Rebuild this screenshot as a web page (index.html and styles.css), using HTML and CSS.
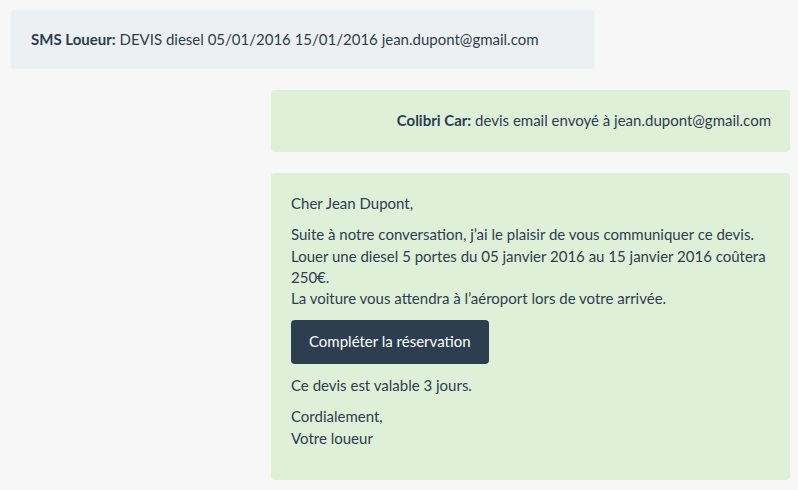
FILE: index.html
```html
<!DOCTYPE html>
<html lang="fr">
<head>
<meta charset="utf-8">
<link rel="stylesheet" href="styles.css">
</head>
<body>
<div class="chat">
  <div class="msg msg-in">
    <strong>SMS Loueur:</strong> DEVIS diesel 05/01/2016 15/01/2016 jean.dupont@gmail.com
  </div>
  <div class="msg msg-out align-right">
    <strong>Colibri Car:</strong> devis email envoyé à jean.dupont@gmail.com
  </div>
  <div class="msg msg-out email">
    <p>Cher Jean Dupont,</p>
    <p>Suite à notre conversation, j’ai le plaisir de vous communiquer ce devis.<br>
    Louer une diesel 5 portes du 05 janvier 2016 au 15 janvier 2016 coûtera 250€.<br>
    La voiture vous attendra à l’aéroport lors de votre arrivée.</p>
    <p class="action"><a class="btn" href="#">Compléter la réservation</a></p>
    <p>Ce devis est valable 3 jours.</p>
    <p>Cordialement,<br>Votre loueur</p>
  </div>
</div>
</body>
</html>
```

FILE: styles.css
```css
html, body {
  margin: 0;
  padding: 0;
  background: #f7f7f7;
}
body {
  font-family: Lato, "Open Sans", sans-serif;
  font-size: 15px;
  line-height: 21.4px;
  color: #2c3e50;
}
.chat {
  display: flex;
  flex-direction: column;
  gap: 21px;
  padding: 10px 8px 10px 11px;
}
.msg {
  border-radius: 4px;
  padding: 19px 20px;
  box-sizing: border-box;
}
.msg-in {
  background: #ecf0f1;
  width: 584px;
}
.msg-out {
  background: #dff0d8;
  width: 519px;
  align-self: flex-end;
}
.align-right {
  text-align: right;
  padding: 20px 19px;
}
.email {
  padding: 20px 20px 21px 20px;
}
.email p {
  margin: 0 0 10px;
}
.email .action {
  display: flex;
  margin-bottom: 11px;
}
.btn {
  display: flex;
  align-items: center;
  box-sizing: border-box;
  height: 44px;
  background: #2c3e50;
  color: #fff;
  text-decoration: none;
  border-radius: 4px;
  padding: 0 18px;
}
```
